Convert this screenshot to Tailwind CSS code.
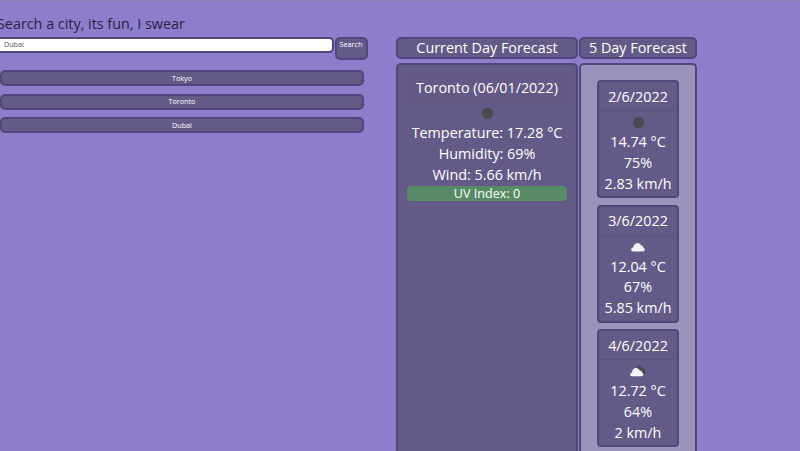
<!DOCTYPE html>
<html lang="en">
<head>
<meta charset="utf-8">
<title>Weather Dashboard</title>
<script src="https://cdn.jsdelivr.net/npm/@tailwindcss/browser@4"></script>
</head>
<body class="h-[451px] overflow-hidden border-t border-[#9186b5] bg-[#8e7dca] font-['Open_Sans','Noto_Sans',sans-serif] text-[14.35px] leading-[20.75px] text-white">
<div class="flex h-[450px]">
  <aside class="w-[396px] shrink-0 pt-3">
    <h1 class="-ml-[3px] h-6 text-[14.35px] leading-[22px] text-[#292343] whitespace-nowrap">Search a city, its fun, I swear</h1>
    <form class="flex items-start">
      <input class="-ml-[4px] -mt-[.5px] h-[16.5px] w-[338px] rounded-[5px] border-2 border-[#51467b] bg-white pl-[6px] pb-[1px] text-[7.2px] leading-[10px] text-[#555]" value="Dubai">
      <button type="button" class="-mt-[.5px] ml-[.5px] h-[23px] w-[33px] rounded-[5px] border-2 border-[#51467b] bg-[#645a87] pb-[8px] text-[7.2px] leading-[11px]">Search</button>
    </form>
    <div class="mt-[10.5px] flex w-[364px] flex-col gap-[7.5px] text-[7.2px] leading-[11px]">
      <button class="h-4 rounded-[5px] border-2 border-[#51467b] bg-[#645a87]">Tokyo</button>
      <button class="h-4 rounded-[5px] border-2 border-[#51467b] bg-[#645a87]">Toronto</button>
      <button class="h-4 rounded-[5px] border-2 border-[#51467b] bg-[#645a87]">Dubai</button>
    </div>
  </aside>
  <section class="flex w-[183px] shrink-0 flex-col pt-9 text-center">
    <h2 class="h-[22px] w-[182px] shrink-0 rounded-[5px] border-2 border-[#51467b] bg-[#645a87] leading-[18px]">Current Day Forecast</h2>
    <div class="mt-1 w-[182px] flex-1 rounded-t-[5px] border-2 border-b-0 border-[#51467b] bg-[#645a87] px-[9px] pt-[10px]">
      <h3 class="h-[29px] rounded bg-[#62577f]/40 leading-[26px]">Toronto (06/01/2022)</h3>
      <svg class="mx-auto mt-[1px] mb-[2px] block h-[16px] w-[16px]" viewBox="0 0 16 16"><circle cx="8.4" cy="8.4" r="5.6" fill="#4a4a4c"/></svg>
      <p class="-mx-2 whitespace-nowrap">Temperature: 17.28 °C</p>
      <p>Humidity: 69%</p>
      <p>Wind: 5.66 km/h</p>
      <p class="mt-[1px] h-[15px] rounded-[4px] bg-[#588b65] text-[12.6px] leading-[15px]">UV Index: 0</p>
    </div>
  </section>
  <section class="flex w-[118px] shrink-0 flex-col pt-9 text-center">
    <h2 class="h-[22px] shrink-0 rounded-[5px] border-2 border-[#51467b] bg-[#645a87] leading-[18px] whitespace-nowrap">5 Day Forecast</h2>
    <div class="mt-1 flex min-h-0 flex-1 flex-col gap-[6.5px] rounded-t-[5px] border-2 border-b-0 border-[#51467b] bg-[#9b93bb] px-4 pt-[15px]">
      <article class="h-[118px] shrink-0 rounded-[4px] border-2 border-[#51467b] bg-[#645a87]">
        <h3 class="h-[29px] border-b border-[#5d5282] leading-[29px]">2/6/2022</h3>
        <svg class="mx-auto mt-[5px] block h-[16px] w-[20px]" viewBox="0 0 20 16"><circle cx="10.4" cy="6.5" r="5.6" fill="#4a4a4c"/></svg>
        <p>14.74 °C</p><p>75%</p><p>2.83 km/h</p>
      </article>
      <article class="h-[118px] shrink-0 rounded-[4px] border-2 border-[#51467b] bg-[#645a87]">
        <h3 class="h-[29px] border-b border-[#5d5282] leading-[28px]">3/6/2022</h3>
        <svg class="mx-auto mt-[5px] block h-[16px] w-[20px]" viewBox="0 0 20 16"><path d="M5.4 10.6C2.4 10.6 2.5 6.8 5.2 6.6C5.3 3.7 8 1.2 10.8 2.2C12 2.6 12.8 3.5 13.1 4.6C14.4 4.5 15.2 5.4 15.2 6.5C17.5 7.2 17.1 10.6 14.8 10.6Z" fill="#f3f2f4"/></svg>
        <p>12.04 °C</p><p>67%</p><p>5.85 km/h</p>
      </article>
      <article class="h-[118px] shrink-0 rounded-[4px] border-2 border-[#51467b] bg-[#645a87]">
        <h3 class="h-[29px] border-b border-[#5d5282] leading-[29px]">4/6/2022</h3>
        <svg class="mx-auto mt-[5px] block h-[16px] w-[20px]" viewBox="0 0 20 16"><path d="M9 2C11.5-.1 14 .8 14.5 2.9C16.8 3.1 17 4.8 16.6 5.6C18.5 6.6 17.6 9 15.8 9H9Z" fill="#4a4a4c"/><path d="M4.3 11.2C1.5 11.2 1.5 7.8 4.1 7.4C4 4.2 6.7 2.4 9.1 3.2C10.5 3.6 11.4 4.7 11.7 5.6C13.1 5.5 14 6.5 13.9 7.5C16 8.2 15.7 11.2 13.6 11.2Z" fill="#f3f2f4"/></svg>
        <p>12.72 °C</p><p>64%</p><p>2 km/h</p>
      </article>
    </div>
  </section>
</div>
</body>
</html>
